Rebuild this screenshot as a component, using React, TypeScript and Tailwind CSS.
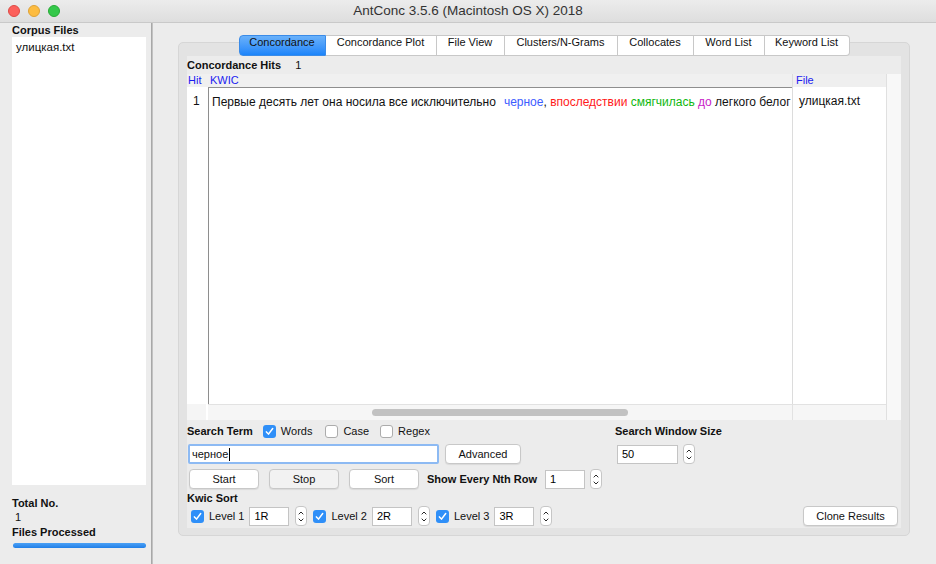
import React from 'react';

const Check = ({ on }: { on?: boolean }) =>
  on ? (
    <span className="w-[13px] h-[13px] rounded-[3px] bg-[#2f8ff8] flex items-center justify-center shrink-0">
      <svg width="9" height="9" viewBox="0 0 9 9">
        <path d="M1.4 4.9 L3.5 7.1 L7.7 1.5" stroke="white" strokeWidth="1.5" fill="none" strokeLinecap="round" strokeLinejoin="round" />
      </svg>
    </span>
  ) : (
    <span className="block w-[13px] h-[13px] rounded-[3px] bg-white border border-[#acacac] shrink-0" />
  );

const Stepper = ({ className = '' }: { className?: string }) => (
  <span className={`w-[12px] h-[20px] rounded-[4px] bg-white border border-[#c6c6c6] flex flex-col items-center justify-center gap-[3px] shrink-0 ${className}`}>
    <svg width="6" height="4" viewBox="0 0 6 4">
      <path d="M0.7 3.3 L3 1 L5.3 3.3" stroke="#2a2a2a" strokeWidth="1" fill="none" />
    </svg>
    <svg width="6" height="4" viewBox="0 0 6 4">
      <path d="M0.7 0.7 L3 3 L5.3 0.7" stroke="#2a2a2a" strokeWidth="1" fill="none" />
    </svg>
  </span>
);

const Btn = ({ children, className = '' }: { children: React.ReactNode; className?: string }) => (
  <button className={`h-[20px] rounded-[4px] border border-[#c8c8c8] text-[11px] text-[#111] flex items-center justify-center shadow-[0_1px_1px_rgba(0,0,0,0.08)] shrink-0 ${className}`}>
    {children}
  </button>
);

const Field = ({ value, className = '' }: { value: string; className?: string }) => (
  <span className={`h-[19px] bg-white border border-[#c4c4c4] text-[11px] text-black pl-[4px] flex items-center shrink-0 ${className}`}>
    {value}
  </span>
);

const tabs = [
  { label: 'Concordance', w: 'w-[87px]' },
  { label: 'Concordance Plot', w: 'w-[111px]' },
  { label: 'File View', w: 'w-[68px]' },
  { label: 'Clusters/N-Grams', w: 'w-[113px]' },
  { label: 'Collocates', w: 'w-[76px]' },
  { label: 'Word List', w: 'w-[71px]' },
  { label: 'Keyword List', w: 'w-[85px]' },
];

export default function App() {
  return (
    <div className="w-[936px] h-[564px] flex flex-col bg-[#ececec] overflow-hidden font-['Liberation_Sans',Arial,sans-serif] text-[#111]">
      {/* Title bar */}
      <div className="h-[23px] shrink-0 flex items-center relative bg-gradient-to-b from-[#ececec] to-[#dedede] border-b border-[#c9c9c9]">
        <div className="flex items-center gap-[8px] pl-[8px]">
          <span className="w-[12px] h-[12px] rounded-full bg-[#fc605b] border border-[#de4a45]" />
          <span className="w-[12px] h-[12px] rounded-full bg-[#fdbc40] border border-[#dea236]" />
          <span className="w-[12px] h-[12px] rounded-full bg-[#34c84a] border border-[#27aa35]" />
        </div>
        <div className="flex-1 text-center text-[13.5px] text-[#333] pr-[60px] leading-none">
          AntConc 3.5.6 (Macintosh OS X) 2018
        </div>
      </div>

      <div className="flex flex-1 min-h-0">
        {/* Left panel */}
        <div className="w-[151px] shrink-0 flex flex-col pl-[12px] pr-[5px]">
          <div className="h-[14px] text-[11px] font-bold leading-[14px]">Corpus Files</div>
          <div className="h-[448px] bg-white pl-[4px] pt-[3px] text-[11.5px] leading-[14px]">улицкая.txt</div>
          <div className="mt-[11px] h-[14px] text-[11px] font-bold leading-[14px]">Total No.</div>
          <div className="h-[14px] text-[11px] leading-[14px] pl-[3px]">1</div>
          <div className="mt-[1px] h-[14px] text-[11px] font-bold leading-[14px]">Files Processed</div>
          <div className="mt-[4px] ml-[1px] h-[5px] rounded-full bg-gradient-to-b from-[#4aa0f5] to-[#1f7fe8]" />
        </div>
        <div className="w-[2px] shrink-0 bg-[#c2c2c2] border-l border-[#a8a8a8]" />

        {/* Right area */}
        <div className="flex-1 flex flex-col pl-[25px] pr-[26px] pt-[12px]">
          <div className="h-[21px] flex justify-center relative z-10">
            {tabs.map((t, i) => (
              <div
                key={t.label}
                className={`${t.w} h-[21px] text-[11px] leading-[13px] text-center border-y border-r ${
                  i === 0
                    ? 'border-l rounded-l-[4px] bg-gradient-to-b from-[#69b1fa] to-[#1a84fa] border-[#3a8be8] text-[#111]'
                    : 'bg-white border-[#c8c8c8]'
                } ${i === tabs.length - 1 ? 'rounded-r-[4px]' : ''}`}
              >
                {t.label}
              </div>
            ))}
          </div>

          <div className="-mt-[14px] h-[494px] rounded-[5px] border border-[#d6d6d6] bg-[#e3e3e3] px-[8px] pt-[13px] pb-[7px] flex">
            <div className="flex-1 bg-[#ececec] flex flex-col">
              {/* Hits */}
              <div className="h-[18px] flex items-center text-[11px]">
                <span className="font-bold">Concordance Hits</span>
                <span className="ml-[14px]">1</span>
              </div>

              {/* Table */}
              <div className="h-[346px] grid grid-cols-[21px_584px_94px_1fr] grid-rows-[13px_317px_16px] text-[11px]">
                <div className="bg-[#f0f0f0] text-[#1b1bf0] pl-[1px] leading-[13px]">Hit</div>
                <div className="bg-[#f0f0f0] text-[#1b1bf0] pl-[2px] leading-[13px]">KWIC</div>
                <div className="bg-[#efefef] text-[#1b1bf0] pl-[3px] leading-[13px] border-l border-[#dcdcdc]">File</div>
                <div className="row-span-3 bg-[#f8f8f8] border-l border-[#e0e0e0]" />

                <div className="bg-white text-[12px] pl-[6px] pt-[7px] leading-[14px]">1</div>
                <div className="bg-white border-l border-t border-[#8e8e8e] pl-[3px] pt-[7px] text-[12px] leading-[14px] whitespace-nowrap overflow-hidden">
                  Первые десять лет она носила все исключительно
                  <span className="ml-[8px] text-[#3c5cff]">черное</span>, <span className="text-[#ff1a1a]">впоследствии</span>{' '}
                  <span className="text-[#10b810]">смягчилась</span> <span className="text-[#c81ec8]">до</span> легкого белог
                </div>
                <div className="bg-white border-l border-[#dcdcdc] pl-[6px] pt-[7px] text-[12px] leading-[14px]">улицкая.txt</div>

                <div className="bg-[#f5f5f5] border-r-[2px] border-white" />
                <div className="bg-[#f6f6f6] border-t border-[#e2e2e2] flex items-center pl-[164px]">
                  <span className="w-[256px] h-[7px] rounded-full bg-[#c2c2c2]" />
                </div>
                <div className="bg-[#f6f6f6] border-t border-l border-[#e2e2e2]" />
              </div>

              {/* Search term row */}
              <div className="h-[23px] flex items-center text-[11px]">
                <div className="w-[428px] flex items-center">
                  <span className="font-bold">Search Term</span>
                  <span className="ml-[10px]"><Check on /></span>
                  <span className="ml-[5px]">Words</span>
                  <span className="ml-[13px]"><Check /></span>
                  <span className="ml-[5px]">Case</span>
                  <span className="ml-[11px]"><Check /></span>
                  <span className="ml-[5px]">Regex</span>
                </div>
                <span className="font-bold">Search Window Size</span>
              </div>

              {/* Input row */}
              <div className="h-[22px] flex items-center">
                <div className="w-[430px] flex items-center">
                  <span className="ml-[1px] w-[251px] h-[20px] bg-white border-[2px] border-[#8dbaf3] rounded-[2px] text-[11px] pl-[2px] flex items-center">
                    черное<span className="w-px h-[13px] bg-black ml-[1px]" />
                  </span>
                  <Btn className="ml-[6px] w-[76px] h-[19px] bg-white">Advanced</Btn>
                </div>
                <Field value="50" className="w-[61px] h-[18px]" />
                <Stepper className="ml-[5px]" />
              </div>

              {/* Buttons row */}
              <div className="mt-[3px] h-[22px] flex items-center text-[11px]">
                <Btn className="ml-[2px] w-[70px] bg-white">Start</Btn>
                <Btn className="ml-[10px] w-[70px] bg-[#f2f2f2]">Stop</Btn>
                <Btn className="ml-[10px] w-[70px] bg-white">Sort</Btn>
                <span className="ml-[8px] w-[118px] font-bold">Show Every Nth Row</span>
                <Field value="1" className="w-[40px]" />
                <Stepper className="ml-[5px]" />
              </div>

              {/* Kwic sort */}
              <div className="mt-[1px] h-[14px] text-[11px] font-bold leading-[14px]">Kwic Sort</div>
              <div className="h-[22px] flex items-center text-[11px]">
                <span className="ml-[4px]"><Check on /></span>
                <span className="ml-[5px]">Level 1</span>
                <Field value="1R" className="ml-[5px] w-[40px]" />
                <Stepper className="ml-[6px]" />
                <span className="ml-[6px]"><Check on /></span>
                <span className="ml-[5px]">Level 2</span>
                <Field value="2R" className="ml-[5px] w-[40px]" />
                <Stepper className="ml-[6px]" />
                <span className="ml-[6px]"><Check on /></span>
                <span className="ml-[5px]">Level 3</span>
                <Field value="3R" className="ml-[5px] w-[40px]" />
                <Stepper className="ml-[6px]" />
                <Btn className="ml-auto mr-[3px] w-[95px] bg-white">Clone Results</Btn>
              </div>
            </div>
          </div>
        </div>
      </div>
    </div>
  );
}
